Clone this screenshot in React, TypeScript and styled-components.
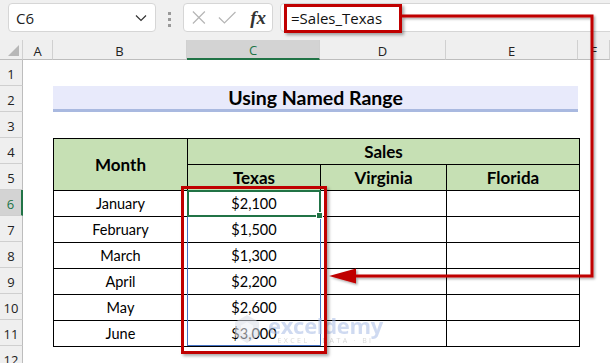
import styled, { createGlobalStyle } from 'styled-components'

const GlobalStyle = createGlobalStyle`
  html, body {
    margin: 0;
    padding: 0;
    background: #ffffff;
  }
  body {
    width: 610px;
    height: 363px;
    overflow: hidden;
  }
`;

const CELL_FONT = `Lato, "Liberation Sans", sans-serif`;
const UI_FONT = `"Open Sans", "Noto Sans", sans-serif`;
const RED = '#c00000';
const GREEN = '#217346';

const Page = styled.div`
  position: relative;
  width: 610px;
  height: 363px;
  overflow: hidden;
  background: #fff;
`;

const Toolbar = styled.div`
  height: 40px;
  box-sizing: border-box;
  background: #f0f0f0;
  display: flex;
  align-items: flex-start;
  padding: 3px 0 0 8px;
`;

const Box = styled.div`
  height: 29px;
  box-sizing: border-box;
  background: #fff;
  border: 1px solid #d6d6d6;
  border-radius: 4px;
  display: flex;
  align-items: center;
`;

const NameBox = styled(Box)`
  width: 148px;
  padding: 0 8px 0 7px;
  justify-content: space-between;
  font-family: ${UI_FONT};
  font-size: 15px;
  color: #222;
`;

const Dots = styled.div`
  width: 27px;
  display: flex;
  flex-direction: column;
  align-items: center;
  gap: 3px;
  padding-top: 9px;
  span {
    width: 3px;
    height: 3px;
    background: #9a9a9a;
  }
`;

const FxBox = styled(Box)`
  width: 90px;
  padding: 0 6px 0 8px;
  gap: 12px;
`;

const FxLabel = styled.span`
  font-family: "Liberation Serif", serif;
  font-style: italic;
  font-weight: bold;
  font-size: 19px;
  color: #333;
  margin-left: 2px;
`;

const FormulaBox = styled(Box)`
  flex: 1;
  margin-left: 7px;
  margin-right: -10px;
  padding-left: 10px;
  font-family: ${UI_FONT};
  font-size: 15px;
  color: #111;
`;

const Sheet = styled.div`
  display: grid;
  grid-template-columns: 23px 30px 134px 133px 126px 132px 1fr;
  grid-template-rows: 20px repeat(12, 26px);
`;

const Corner = styled.div`
  grid-column: 1;
  grid-row: 1;
  background: #efefef;
  border-bottom: 1px solid #bdbdbd;
  border-right: 1px solid #d0d0d0;
  box-sizing: border-box;
  position: relative;
  &::after {
    content: '';
    position: absolute;
    right: 3px;
    bottom: 3px;
    border-style: solid;
    border-width: 0 0 11px 11px;
    border-color: transparent transparent #b7b7b7 transparent;
  }
`;

const ColHeader = styled.div<{ $col: number; $selected?: boolean }>`
  grid-column: ${(p) => p.$col};
  grid-row: 1;
  box-sizing: border-box;
  display: flex;
  align-items: center;
  justify-content: center;
  padding-top: 2px;
  background: ${(p) => (p.$selected ? '#d3d3d3' : '#efefef')};
  border-bottom: ${(p) => (p.$selected ? `2px solid ${GREEN}` : '1px solid #bdbdbd')};
  border-right: 1px solid #d0d0d0;
  font-family: ${UI_FONT};
  font-size: 13px;
  color: ${(p) => (p.$selected ? GREEN : '#222')};
  overflow: hidden;
`;

const RowHeader = styled.div<{ $row: number; $selected?: boolean }>`
  grid-column: 1;
  grid-row: ${(p) => p.$row + 1};
  box-sizing: border-box;
  display: flex;
  align-items: center;
  justify-content: center;
  padding-top: 2px;
  background: ${(p) => (p.$selected ? '#d3d3d3' : '#efefef')};
  border-right: ${(p) => (p.$selected ? `2px solid ${GREEN}` : '1px solid #bdbdbd')};
  border-bottom: 1px solid #cfcfcf;
  font-family: ${UI_FONT};
  font-size: 13px;
  color: ${(p) => (p.$selected ? GREEN : '#222')};
`;

const Title = styled.div`
  grid-column: 3 / 7;
  grid-row: 3;
  background: #e8eafb;
  border-bottom: 3px solid #a9b9e0;
  display: flex;
  align-items: center;
  justify-content: center;
  font-family: ${CELL_FONT};
  font-weight: bold;
  font-size: 19.5px;
  color: #000;
`;

const TableArea = styled.div`
  grid-column: 3 / 7;
  grid-row: 5 / 13;
`;

const DataTable = styled.table`
  border-collapse: collapse;
  table-layout: fixed;
  width: 526px;
  font-family: ${CELL_FONT};
  color: #000;
  tr {
    height: 26px;
  }
  td, th {
    border: 1px solid #000;
    padding: 0;
    text-align: center;
  }
`;

const HeadCell = styled.th`
  background: #c6e0b4;
  font-weight: bold;
  font-size: 17px;
`;

const Cell = styled.td`
  font-size: 14.5px;
  background: #fff;
`;

const Frame = styled.div`
  position: absolute;
  box-sizing: border-box;
  border: 3px solid ${RED};
  box-shadow: 2px 2px 3px rgba(0, 0, 0, 0.35);
  pointer-events: none;
`;

const FormulaFrame = styled(Frame)`
  left: 284px;
  top: 4px;
  width: 118px;
  height: 29px;
`;

const RangeFrame = styled(Frame)`
  left: 181px;
  top: 186px;
  width: 146px;
  height: 168px;
`;

const RangeOutline = styled.div`
  position: absolute;
  left: 187px;
  top: 190px;
  width: 134px;
  height: 156px;
  box-sizing: border-box;
  border: 1px solid #4472c4;
`;

const ActiveCell = styled.div`
  position: absolute;
  left: 187px;
  top: 190px;
  width: 134px;
  height: 27px;
  box-sizing: border-box;
  border: 2px solid ${GREEN};
  &::after {
    content: '';
    position: absolute;
    right: -4px;
    bottom: -4px;
    width: 5px;
    height: 5px;
    background: ${GREEN};
    border: 1px solid #fff;
  }
`;

const Connector = styled.svg`
  position: absolute;
  left: 0;
  top: 0;
  pointer-events: none;
`;

const Watermark = styled.div`
  position: absolute;
  left: 234px;
  top: 314px;
  display: flex;
  align-items: center;
  gap: 8px;
  opacity: 0.55;
  pointer-events: none;
`;

const Brand = styled.div`
  display: flex;
  flex-direction: column;
  align-items: center;
  line-height: 1;
  font-family: ${UI_FONT};
  color: #a9bde6;
  b {
    font-size: 22px;
    font-weight: 700;
    letter-spacing: -0.3px;
  }
  small {
    font-size: 7px;
    letter-spacing: 2.4px;
    color: #b8b8b8;
    margin-top: 1px;
  }
`;

const rows = [
  { month: 'January', texas: '$2,100' },
  { month: 'February', texas: '$1,500' },
  { month: 'March', texas: '$1,300' },
  { month: 'April', texas: '$2,200' },
  { month: 'May', texas: '$2,600' },
  { month: 'June', texas: '$3,000' },
];

const columns = ['A', 'B', 'C', 'D', 'E', 'F'];

function App() {
  return (
    <>
      <GlobalStyle />
      <Page>
        <Toolbar>
          <NameBox>
            <span>C6</span>
            <svg width="12" height="8" viewBox="0 0 12 8">
              <path d="M1 1.5 L6 6.5 L11 1.5" fill="none" stroke="#333" strokeWidth="1.2" />
            </svg>
          </NameBox>
          <Dots>
            <span />
            <span />
            <span />
          </Dots>
          <FxBox>
            <svg width="15" height="15" viewBox="0 0 15 15">
              <path d="M1 1 L14 14 M14 1 L1 14" stroke="#b5b5b5" strokeWidth="1.3" />
            </svg>
            <svg width="20" height="15" viewBox="0 0 20 15">
              <path d="M1 7.5 L7 13.5 L19 1.5" fill="none" stroke="#b5b5b5" strokeWidth="1.3" />
            </svg>
            <FxLabel>fx</FxLabel>
          </FxBox>
          <FormulaBox>=Sales_Texas</FormulaBox>
        </Toolbar>

        <Sheet>
          <Corner />
          {columns.map((c, i) => (
            <ColHeader key={c} $col={i + 2} $selected={c === 'C'}>
              {c}
            </ColHeader>
          ))}
          {Array.from({ length: 12 }, (_, i) => (
            <RowHeader key={i} $row={i + 1} $selected={i + 1 === 6}>
              {i + 1}
            </RowHeader>
          ))}

          <Title>Using Named Range</Title>

          <TableArea>
            <DataTable>
              <colgroup>
                <col style={{ width: 134 }} />
                <col style={{ width: 133 }} />
                <col style={{ width: 126 }} />
                <col style={{ width: 133 }} />
              </colgroup>
              <thead>
                <tr>
                  <HeadCell rowSpan={2}>Month</HeadCell>
                  <HeadCell colSpan={3}>Sales</HeadCell>
                </tr>
                <tr>
                  <HeadCell>Texas</HeadCell>
                  <HeadCell>Virginia</HeadCell>
                  <HeadCell>Florida</HeadCell>
                </tr>
              </thead>
              <tbody>
                {rows.map((r) => (
                  <tr key={r.month}>
                    <Cell>{r.month}</Cell>
                    <Cell>{r.texas}</Cell>
                    <Cell />
                    <Cell />
                  </tr>
                ))}
              </tbody>
            </DataTable>
          </TableArea>
        </Sheet>

        <RangeOutline />
        <ActiveCell />

        <Watermark>
          <svg width="26" height="30" viewBox="0 0 26 30">
            <path d="M13 1 L25 8 L25 22 L13 29 L1 22 L1 8 Z" fill="#d9dde6" />
            <path d="M13 8 L19 11.5 L19 18.5 L13 22 L7 18.5 L7 11.5 Z" fill="#eef0f5" />
          </svg>
          <Brand>
            <b>exceldemy</b>
            <small>EXCEL · DATA · BI</small>
          </Brand>
        </Watermark>

        <RangeFrame />
        <FormulaFrame />

        <Connector width="610" height="363">
          <defs>
            <filter id="sh" x="-5%" y="-5%" width="115%" height="115%">
              <feDropShadow dx="1.5" dy="1.5" stdDeviation="1" floodColor="#000" floodOpacity="0.35" />
            </filter>
          </defs>
          <g filter="url(#sh)">
            <polyline
              points="402,16 592,16 592,276 354,276"
              fill="none"
              stroke={RED}
              strokeWidth="3"
            />
            <polygon points="329,276 356,268.5 356,283.5" fill={RED} />
          </g>
        </Connector>
      </Page>
    </>
  )
}

export default App
